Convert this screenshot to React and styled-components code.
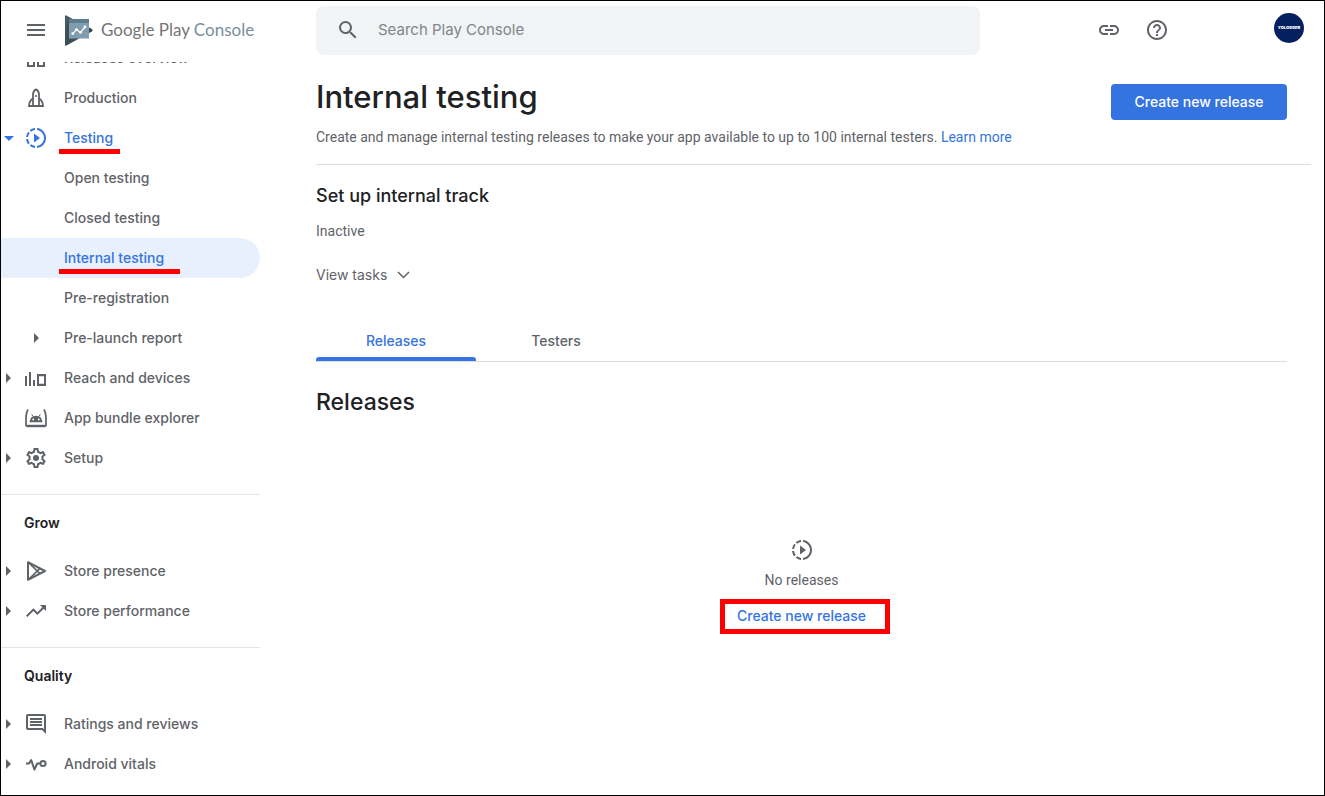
import React from "react";
import styled, { createGlobalStyle } from "styled-components";
import {
  MdMenu,
  MdSearch,
  MdLink,
  MdHelpOutline,
  MdSlowMotionVideo,
  MdTrendingUp,
  MdOutlineInsertComment,
} from "react-icons/md";

const blue = "#3574e0";
const grey = "#5f6368";
const ink = "#202124";
const line = "#dadce0";
const mark = "#ff0000";
const display = `Inter, "Liberation Sans", sans-serif`;
const body = `Roboto, "Liberation Sans", sans-serif`;
const brand = `Lato, "Liberation Sans", sans-serif`;

const GlobalStyle = createGlobalStyle`
  *, *::before, *::after { box-sizing: border-box; }
  body { margin: 0; background: #fff; color: ${grey}; font: 400 14px/20px ${body}; }
  button { font: inherit; color: inherit; background: none; border: 0; padding: 0; cursor: pointer; }
  h1, h2, h3, p, ul { margin: 0; padding: 0; }
  ul { list-style: none; }
  a { color: ${blue}; text-decoration: none; }
  svg { display: block; flex: none; }
`;

const Frame = styled.div`
  height: 100vh;
  display: flex;
  flex-direction: column;
  border: 1px solid #000;
  overflow: hidden;
`;

const TopBar = styled.header`
  flex: none;
  height: 61px;
  display: flex;
  align-items: center;
  padding: 0 20px 3px 0;
`;

const Brand = styled.div`
  flex: none;
  width: 315px;
  display: flex;
  align-items: center;
  padding-left: 23px;
`;

const IconButton = styled.button`
  flex: none;
  width: 24px;
  height: 24px;
  color: ${grey};
`;

const BrandLink = styled.a`
  display: flex;
  align-items: center;
  gap: 8px;
  margin-left: 17px;
  font: 400 17px/24px ${brand};
  color: #757575;
  white-space: nowrap;
`;

const BrandSuffix = styled.span`
  color: #78909c;
`;

const Search = styled.label`
  flex: 1;
  max-width: 664px;
  height: 49px;
  display: flex;
  align-items: center;
  gap: 18px;
  padding: 0 20px;
  border-radius: 8px;
  background: #f1f3f4;
`;

const SearchInput = styled.input`
  flex: 1;
  min-width: 0;
  border: 0;
  padding: 0;
  outline: 0;
  background: none;
  font: 400 15px/24px ${display};
  color: ${ink};
  &::placeholder { color: #80868b; opacity: 1; }
`;

const Tools = styled.div`
  display: flex;
  align-items: center;
  gap: 24px;
  margin-left: auto;
`;

const Avatar = styled.button`
  width: 30px;
  height: 30px;
  margin: 0 0 4px 105px;
  border-radius: 50%;
  background: #05205f;
  color: #fff;
  font: 900 4px/30px ${display};
  text-align: center;
`;

const Columns = styled.div`
  flex: 1;
  min-height: 0;
  display: flex;
`;

const Sidebar = styled.nav`
  flex: none;
  width: 259px;
  overflow: hidden;
`;

const NavGroup = styled.ul`
  padding-bottom: 16px;
  &:first-child { margin-top: -24px; }
`;

const NavHeading = styled.h3`
  border-top: 1px solid #e4e5e7;
  padding-left: 23px;
  font: 600 14px/56px ${display};
  color: ${ink};
`;

const NavLink = styled.a`
  height: 40px;
  display: flex;
  align-items: center;
  border-radius: 0 20px 20px 0;
  background: ${(p) => (p.$selected ? "#e8f0fe" : "transparent")};
  color: ${(p) => (p.$active ? blue : grey)};
  font: 500 14px/20px ${display};
`;

const ArrowSlot = styled.span`
  width: 15px;
  display: flex;
  justify-content: center;
  margin-right: 8px;
`;

const IconSlot = styled.span`
  width: 24px;
  height: 24px;
  display: flex;
  align-items: center;
  justify-content: center;
  margin-right: 16px;
`;

const NavText = styled.span`
  position: relative;
`;

const Underline = styled.span`
  position: absolute;
  left: -5px;
  top: 21px;
  width: ${(p) => p.$width}px;
  height: 5px;
  background: ${mark};
`;

const Main = styled.main`
  flex: 1;
  min-width: 0;
  padding: 15px 13px 0 56px;
`;

const PageHead = styled.div`
  display: flex;
  justify-content: space-between;
  align-items: flex-start;
  padding: 0 24px 17px 0;
  border-bottom: 1px solid ${line};
`;

const PageTitle = styled.h1`
  font: 500 31px/40px ${display};
  color: ${ink};
`;

const Lead = styled.p`
  margin-top: 10px;
`;

const PrimaryButton = styled.button`
  flex: none;
  width: 176px;
  height: 36px;
  margin-top: 7px;
  border-radius: 4px;
  background: ${blue};
  color: #fff;
  font: 500 14px/20px ${display};
`;

const Content = styled.div`
  padding: 19px 24px 0 0;
`;

const TrackTitle = styled.h2`
  font: 500 18px/24px ${display};
  color: ${ink};
`;

const Status = styled.p`
  margin-top: 13px;
`;

const ViewTasks = styled.button`
  display: flex;
  align-items: center;
  gap: 10px;
  margin-top: 24px;
  font: 400 14px/20px ${display};
`;

const Tabs = styled.div`
  display: flex;
  margin-top: 36px;
  border-bottom: 1px solid ${line};
`;

const Tab = styled.button`
  width: 160px;
  height: 40px;
  position: relative;
  font: 500 14px/20px ${display};
  color: ${(p) => (p.$active ? blue : grey)};
  &::after {
    content: "";
    position: absolute;
    inset: auto 0 0;
    height: 4px;
    border-radius: 3px 3px 0 0;
    background: ${(p) => (p.$active ? blue : "transparent")};
  }
`;

const SectionTitle = styled.h2`
  margin-top: 24px;
  font: 500 23px/32px ${display};
  color: ${ink};
`;

const Empty = styled.div`
  display: flex;
  flex-direction: column;
  align-items: center;
  margin-top: 120px;
`;

const EmptyText = styled.p`
  margin: 8px 0 16px;
`;

const TextButton = styled.button`
  position: relative;
  color: ${blue};
  font: 500 14px/20px ${display};
`;

const MarkBox = styled.span`
  position: absolute;
  inset: -7px -24px -8px -17px;
  border: 5px solid ${mark};
`;

const Logo = () => (
  <svg width="28" height="31" viewBox="0 0 28 31" aria-hidden="true">
    <path d="M0 1.2Q0 0 1.3.5L27 14.2Q28 15.3 27 16.3L1.3 30.4Q0 31 0 29.6z" fill="#455a64" />
    <path d="M0 15.5V29.6Q0 31 1.3 30.4L14 23.5H4V4z" fill="#37474f" opacity=".6" />
    <path d="M4 4h20v19.5H4z" fill="#7f9dae" />
    <path d="M4 4h20v4H4z" fill="#5d7c8c" />
    <path d="M24 12.6 27 14.2Q28 15.3 27 16.3L24 18z" fill="#37474f" />
    <path d="M7.8 18.6l3.7-4 4 2.8 4.5-5.4" fill="none" stroke="#fff" strokeWidth="1.2" />
    <g fill="#fff">
      <circle cx="7.8" cy="18.6" r="1.4" />
      <circle cx="11.5" cy="14.6" r="1.4" />
      <circle cx="15.5" cy="17.4" r="1.4" />
      <circle cx="20" cy="12" r="1.4" />
    </g>
  </svg>
);

const Glyph = ({ children, ...rest }) => (
  <svg width="24" height="24" viewBox="0 0 24 24" fill="none" stroke="currentColor" strokeWidth="2" aria-hidden="true" {...rest}>
    {children}
  </svg>
);

const OverviewIcon = () => (
  <Glyph>
    <path d="M4 4h6v5H4zM14 4h6v5h-6zM4 15h6v5H4zM14 15h6v5h-6z" />
  </Glyph>
);

const RocketIcon = () => (
  <Glyph strokeWidth="1.8">
    <path d="M9 20V8.5Q9 5 12 3.4 15 5 15 8.5V20" />
    <path d="M9 12.2Q5 15 5 20H19Q19 15 15 12.2" />
    <circle cx="12" cy="10" r="1.1" fill="currentColor" stroke="none" />
  </Glyph>
);

const DevicesIcon = () => (
  <Glyph>
    <path d="M2 10V20M6 6V20M10 14V20" />
    <path d="M14 9h7v10h-7z" />
    <path d="M13 9.3h9M13 18.8h9" />
  </Glyph>
);

const BundleIcon = () => (
  <Glyph>
    <path d="M4 3.5Q2 7 2 11V19.2Q2 20 3 20H21Q22 20 22 19.2V11Q22 7 20 3.5" strokeWidth="1.7" />
    <path d="M2.4 20H21.6" strokeWidth="2.4" />
    <path d="M9 10.5 7.7 8.3M15 10.5l1.3-2.2" strokeWidth="1" />
    <path
      d="M5.5 16.2Q6.2 9.8 12 9.8T18.5 16.2zM8.3 13.5a.9.9 0 1 0 1.8 0 .9.9 0 1 0-1.8 0zM13.9 13.5a.9.9 0 1 0 1.8 0 .9.9 0 1 0-1.8 0z"
      fill="currentColor"
      fillRule="evenodd"
      stroke="none"
    />
  </Glyph>
);

const SetupIcon = () => (
  <Glyph stroke="none">
    <path
      fill="currentColor"
      d="M19.43 12.98c.04-.32.07-.64.07-.98 0-.34-.03-.66-.07-.98l2.11-1.65c.19-.15.24-.42.12-.64l-2-3.46c-.09-.16-.26-.25-.44-.25-.06 0-.12.01-.17.03l-2.49 1c-.52-.4-1.08-.73-1.69-.98l-.38-2.65C14.46 2.18 14.25 2 14 2h-4c-.25 0-.46.18-.49.42l-.38 2.65c-.61.25-1.17.59-1.69.98l-2.49-1c-.06-.02-.12-.03-.18-.03-.17 0-.34.09-.43.25l-2 3.46c-.13.22-.07.49.12.64l2.11 1.65c-.04.32-.07.65-.07.98 0 .33.03.66.07.98l-2.11 1.65c-.19.15-.24.42-.12.64l2 3.46c.09.16.26.25.44.25.06 0 .12-.01.17-.03l2.49-1c.52.4 1.08.73 1.69.98l.38 2.65c.03.24.24.42.49.42h4c.25 0 .46-.18.49-.42l.38-2.65c.61-.25 1.17-.59 1.69-.98l2.49 1c.06.02.12.03.18.03.17 0 .34-.09.43-.25l2-3.46c.12-.22.07-.49-.12-.64l-2.11-1.65zm-1.98-1.71c.04.31.05.52.05.73 0 .21-.02.43-.05.73l-.14 1.13.89.7 1.08.84-.7 1.21-1.27-.51-1.04-.42-.9.68c-.43.32-.84.56-1.25.73l-1.06.43-.16 1.13-.2 1.35h-1.4l-.19-1.35-.16-1.13-1.06-.43c-.43-.18-.83-.41-1.23-.71l-.91-.7-1.06.43-1.27.51-.7-1.21 1.08-.84.89-.7-.14-1.13c-.03-.31-.05-.54-.05-.74s.02-.43.05-.73l.14-1.13-.89-.7-1.08-.84.7-1.21 1.27.51 1.04.42.9-.68c.43-.32.84-.56 1.25-.73l1.06-.43.16-1.13.2-1.35h1.39l.19 1.35.16 1.13 1.06.43c.43.18.83.41 1.23.71l.91.7 1.06-.43 1.27-.51.7 1.21-1.07.85-.89.7.14 1.13z"
    />
    <circle cx="12" cy="12" r="3" fill="currentColor" />
  </Glyph>
);

const PlayStoreIcon = () => (
  <Glyph strokeLinejoin="round" strokeWidth="2">
    <path d="M4 3.2V20.8L21 12z" />
    <path d="M4.5 3.5 16 14.6M4.5 20.5 16 9.4" strokeWidth="1.7" />
  </Glyph>
);

const VitalsIcon = () => (
  <Glyph>
    <path d="M2 11.5H5L7.2 8 10.4 17.5 13.2 11.5H16" strokeLinejoin="round" />
    <circle cx="19" cy="11.5" r="2.6" />
  </Glyph>
);

const Arrow = ({ down }) =>
  down ? (
    <svg width="10" height="5" viewBox="0 0 10 5" aria-hidden="true">
      <path d="M0 0h10L5 5z" fill="currentColor" />
    </svg>
  ) : (
    <svg width="5" height="10" viewBox="0 0 5 10" aria-hidden="true">
      <path d="M0 0v10l5-5z" fill="currentColor" />
    </svg>
  );

const groups = [
  {
    items: [
      { label: "Releases overview", icon: <OverviewIcon /> },
      { label: "Production", icon: <RocketIcon /> },
      { label: "Testing", icon: <MdSlowMotionVideo size={24} />, arrow: "down", active: true, underline: 61 },
      { label: "Open testing" },
      { label: "Closed testing" },
      { label: "Internal testing", active: true, selected: true, underline: 121 },
      { label: "Pre-registration" },
      { label: "Pre-launch report", icon: <Arrow /> },
      { label: "Reach and devices", icon: <DevicesIcon />, arrow: "right" },
      { label: "App bundle explorer", icon: <BundleIcon /> },
      { label: "Setup", icon: <SetupIcon />, arrow: "right" },
    ],
  },
  {
    heading: "Grow",
    items: [
      { label: "Store presence", icon: <PlayStoreIcon />, arrow: "right" },
      { label: "Store performance", icon: <MdTrendingUp size={24} />, arrow: "right" },
    ],
  },
  {
    heading: "Quality",
    items: [
      { label: "Ratings and reviews", icon: <MdOutlineInsertComment size={24} />, arrow: "right" },
      { label: "Android vitals", icon: <VitalsIcon />, arrow: "right" },
    ],
  },
];

const NavItem = ({ label, icon, arrow, active, selected, underline }) => (
  <li>
    <NavLink href="#" $active={active} $selected={selected} aria-current={selected ? "page" : undefined}>
      <ArrowSlot>{arrow && <Arrow down={arrow === "down"} />}</ArrowSlot>
      <IconSlot>{icon}</IconSlot>
      <NavText>
        {label}
        {underline && <Underline $width={underline} />}
      </NavText>
    </NavLink>
  </li>
);

export default function App() {
  return (
    <Frame>
      <GlobalStyle />
      <TopBar>
        <Brand>
          <IconButton aria-label="Menu">
            <MdMenu size={24} />
          </IconButton>
          <BrandLink href="#">
            <Logo />
            <span>
              Google Play <BrandSuffix>Console</BrandSuffix>
            </span>
          </BrandLink>
        </Brand>
        <Search>
          <MdSearch size={24} />
          <SearchInput type="text" placeholder="Search Play Console" aria-label="Search Play Console" />
        </Search>
        <Tools>
          <IconButton aria-label="Copy link">
            <MdLink size={24} />
          </IconButton>
          <IconButton aria-label="Help">
            <MdHelpOutline size={24} />
          </IconButton>
        </Tools>
        <Avatar>YOLOGGER</Avatar>
      </TopBar>
      <Columns>
        <Sidebar>
          {groups.map((group, i) => (
            <React.Fragment key={i}>
              {group.heading && <NavHeading>{group.heading}</NavHeading>}
              <NavGroup>
                {group.items.map((item) => (
                  <NavItem key={item.label} {...item} />
                ))}
              </NavGroup>
            </React.Fragment>
          ))}
        </Sidebar>
        <Main>
          <PageHead>
            <div>
              <PageTitle>Internal testing</PageTitle>
              <Lead>
                Create and manage internal testing releases to make your app available to up to 100 internal testers.{" "}
                <a href="#">Learn more</a>
              </Lead>
            </div>
            <PrimaryButton>Create new release</PrimaryButton>
          </PageHead>
          <Content>
            <TrackTitle>Set up internal track</TrackTitle>
            <Status>Inactive</Status>
            <ViewTasks>
              View tasks
              <svg width="13" height="8" viewBox="0 0 13 8" aria-hidden="true">
                <path d="M1 1l5.5 5.5L12 1" fill="none" stroke="currentColor" strokeWidth="1.5" />
              </svg>
            </ViewTasks>
            <Tabs role="tablist">
              <Tab role="tab" aria-selected="true" $active>
                Releases
              </Tab>
              <Tab role="tab" aria-selected="false">
                Testers
              </Tab>
            </Tabs>
            <SectionTitle>Releases</SectionTitle>
            <Empty>
              <MdSlowMotionVideo size={24} />
              <EmptyText>No releases</EmptyText>
              <TextButton>
                Create new release
                <MarkBox />
              </TextButton>
            </Empty>
          </Content>
        </Main>
      </Columns>
    </Frame>
  );
}
